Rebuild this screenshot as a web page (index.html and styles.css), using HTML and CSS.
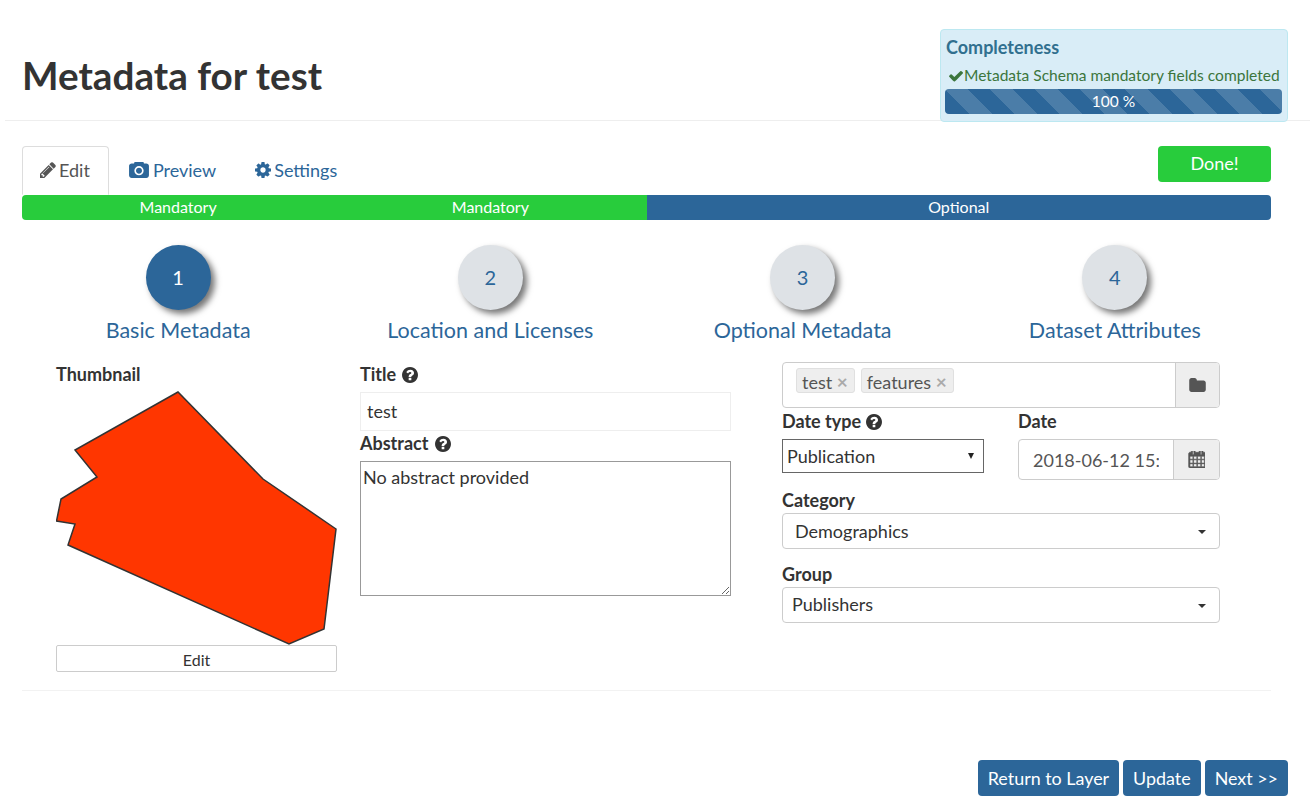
FILE: index.html
```html
<!DOCTYPE html>
<html>
<head>
    <title>Metadata for test</title>
    <link rel="stylesheet" href="styles.css">
</head>
<body>
    <svg class="icon-defs" xmlns="http://www.w3.org/2000/svg">
        <symbol id="i-pencil" viewBox="128 128 1536 1536"><path d="M491 1536l91-91-235-235-91 91v107h128v128h107zm523-928q0-22-22-22-10 0-17 7l-542 542q-7 7-7 17 0 22 22 22 10 0 17-7l542-542q7-7 7-17zm-54-192l416 416-832 832h-416v-416zm683 96q0 53-37 90l-166 166-416-416 166-165q36-38 90-38 53 0 91 38l235 234q37 39 37 91z"/></symbol>
        <symbol id="i-camera" viewBox="0 120 1920 1544"><path d="M960 672q119 0 203.500 84.500t84.500 203.500-84.500 203.500-203.500 84.500-203.500-84.500-84.500-203.500 84.500-203.500 203.500-84.500zm704-416q106 0 181 75t75 181v896q0 106-75 181t-181 75h-1408q-106 0-181-75t-75-181v-896q0-106 75-181t181-75h224l51-136q19-49 69.500-84.500t103.500-35.500h512q53 0 103.500 35.500t69.500 84.500l51 136h224zm-704 1152q185 0 316.500-131.500t131.500-316.500-131.500-316.500-316.500-131.500-316.500 131.500-131.500 316.500 131.500 316.500 316.500 131.500z"/></symbol>
        <symbol id="i-cog" viewBox="0 128 1536 1536"><path d="M1024 896q0-106-75-181t-181-75-181 75-75 181 75 181 181 75 181-75 75-181zm512-109v222q0 12-8 23t-20 13l-185 28q-19 54-39 91 35 50 107 138 10 12 10 25t-9 23q-27 37-99 108t-94 71q-12 0-26-9l-138-108q-44 23-91 38-16 136-29 186-7 28-36 28h-222q-14 0-24.500-8.500t-11.500-21.500l-28-184q-49-16-90-37l-141 107q-10 9-25 9-14 0-25-11-126-114-165-168-7-10-7-23 0-12 8-23 15-21 51-66.500t54-70.500q-27-50-41-99l-183-27q-13-2-21-12.500t-8-23.500v-222q0-12 8-23t19-13l186-28q14-46 39-92-40-57-107-138-10-12-10-24 0-10 9-23 26-36 98.500-107.500t94.500-71.500q13 0 26 10l138 107q44-23 91-38 16-136 29-186 7-28 36-28h222q14 0 24.500 8.500t11.500 21.500l28 184q49 16 90 37l142-107q9-9 24-9 13 0 25 10 129 119 165 170 7 8 7 22 0 12-8 23-15 21-51 66.500t-54 70.500q26 50 41 98l183 28q13 2 21 12.500t8 23.500z"/></symbol>
        <symbol id="i-question" viewBox="0 128 1536 1536"><path d="M896 1376v-192q0-14-9-23t-23-9h-192q-14 0-23 9t-9 23v192q0 14 9 23t23 9h192q14 0 23-9t9-23zm256-672q0-88-55.500-163t-138.500-116-170-41q-243 0-371 213-15 24 8 42l132 100q7 6 19 6 16 0 25-12 53-68 86-92 34-24 86-24 48 0 85.500 26t37.500 59q0 38-20 61t-68 45q-63 28-115.500 86.500t-52.500 125.500v36q0 14 9 23t23 9h192q14 0 23-9t9-23q0-19 21.500-49.500t54.500-49.500q32-18 49-28.500t46-35 44.500-48 28-60.500 12.500-81zm384 192q0 209-103 385.500t-279.500 279.500-385.500 103-385.500-103-279.500-279.500-103-385.500 103-385.500 279.500-279.500 385.500-103 385.500 103 279.500 279.500 103 385.500z"/></symbol>
        <symbol id="i-check" viewBox="121 270 1550 1260"><path d="M1671 566q0 40-28 68l-724 724-136 136q-28 28-68 28t-68-28l-136-136-362-362q-28-28-28-68t28-68l136-136q28-28 68-28t68 28l294 295 656-657q28-28 68-28t68 28l136 136q28 28 28 68z"/></symbol>
        <symbol id="i-folder" viewBox="0 128 1664 1408"><path d="M1664 608v704q0 92-66 158t-158 66h-1216q-92 0-158-66t-66-158v-960q0-92 66-158t158-66h320q92 0 158 66t66 158v32h672q92 0 158 66t66 158z"/></symbol>
        <symbol id="i-calendar" viewBox="0 128 1664 1664"><path d="M192 1664h288v-288h-288v288zm352 0h320v-288h-320v288zm-352-352h288v-320h-288v320zm352 0h320v-320h-320v320zm-352-384h288v-288h-288v288zm736 736h320v-288h-320v288zm-384-736h320v-288h-320v288zm768 736h288v-288h-288v288zm-384-352h320v-320h-320v320zm-352-864v-288q0-13-9.500-22.500t-22.500-9.500h-64q-13 0-22.500 9.500t-9.500 22.500v288q0 13 9.500 22.500t22.500 9.500h64q13 0 22.500-9.500t9.500-22.500zm736 864h288v-320h-288v320zm-384-384h320v-288h-320v288zm384 0h288v-288h-288v288zm32-480v-288q0-13-9.500-22.500t-22.500-9.500h-64q-13 0-22.500 9.500t-9.500 22.500v288q0 13 9.500 22.500t22.500 9.500h64q13 0 22.500-9.500t9.500-22.500zm384-64v1280q0 52-38 90t-90 38h-1408q-52 0-90-38t-38-90v-1280q0-52 38-90t90-38h128v-96q0-66 47-113t113-47h64q66 0 113 47t47 113v96h384v-96q0-66 47-113t113-47h64q66 0 113 47t47 113v96h128q52 0 90 38t38 90z"/></symbol>
    </svg>

    <div class="page-header">
        <h1>Metadata for test</h1>
        <div class="completeness">
            <h4>Completeness</h4>
            <p class="complete-msg"><svg class="icon icon-check"><use href="#i-check"/></svg>Metadata Schema mandatory fields completed</p>
            <div class="progress-striped">100 %</div>
        </div>
    </div>

    <div class="main">
        <div class="tab-row">
            <ul class="tabs">
                <li class="tab active"><svg class="icon"><use href="#i-pencil"/></svg>Edit</li>
                <li class="tab"><svg class="icon icon-wide"><use href="#i-camera"/></svg>Preview</li>
                <li class="tab"><svg class="icon"><use href="#i-cog"/></svg>Settings</li>
            </ul>
            <button class="btn-done">Done!</button>
        </div>

        <div class="stage-bar">
            <div class="stage mandatory">Mandatory</div>
            <div class="stage mandatory">Mandatory</div>
            <div class="stage optional">Optional</div>
        </div>

        <div class="steps">
            <div class="step current">
                <div class="step-circle">1</div>
                <div class="step-label">Basic Metadata</div>
            </div>
            <div class="step">
                <div class="step-circle">2</div>
                <div class="step-label">Location and Licenses</div>
            </div>
            <div class="step">
                <div class="step-circle">3</div>
                <div class="step-label">Optional Metadata</div>
            </div>
            <div class="step">
                <div class="step-circle">4</div>
                <div class="step-label">Dataset Attributes</div>
            </div>
        </div>

        <div class="form-panel">
            <div class="col-thumb">
                <label class="field-label">Thumbnail</label>
                <svg class="thumb" viewBox="0 0 281 255" xmlns="http://www.w3.org/2000/svg">
                    <polygon points="122,2 19,60 41,87 5,109 0.500,131 19,134 12,155 233,254 268,239 280,139 207,89" fill="#ff3600" stroke="#333" stroke-width="1.500"/>
                </svg>
                <button class="btn-thumb">Edit</button>
            </div>

            <div class="col-main">
                <label class="field-label">Title <svg class="icon"><use href="#i-question"/></svg></label>
                <input class="input-title" type="text" value="test">
                <label class="field-label">Abstract <svg class="icon"><use href="#i-question"/></svg></label>
                <textarea class="input-abstract">No abstract provided</textarea>
            </div>

            <div class="col-side">
                <div class="input-group keywords">
                    <div class="tag-box">
                        <span class="tag">test <b>×</b></span>
                        <span class="tag">features <b>×</b></span>
                    </div>
                    <span class="addon"><svg class="icon icon-folder"><use href="#i-folder"/></svg></span>
                </div>

                <div class="date-row">
                    <div class="date-type">
                        <label class="field-label">Date type <svg class="icon"><use href="#i-question"/></svg></label>
                        <div class="select-wrap">
                            <select class="native-select"><option>Publication</option></select>
                        </div>
                    </div>
                    <div class="date-value">
                        <label class="field-label">Date</label>
                        <div class="input-group">
                            <input class="input-date" type="text" value="2018-06-12 15:00">
                            <span class="addon"><svg class="icon icon-calendar"><use href="#i-calendar"/></svg></span>
                        </div>
                    </div>
                </div>

                <label class="field-label label-category">Category</label>
                <div class="dropdown category">Demographics</div>

                <label class="field-label label-group">Group</label>
                <div class="dropdown group">Publishers</div>
            </div>
        </div>
    </div>

    <div class="actions">
        <button class="btn-blue">Return to Layer</button>
        <button class="btn-blue">Update</button>
        <button class="btn-blue">Next &gt;&gt;</button>
    </div>
</body>
</html>
```

FILE: styles.css
```css
/* Base */
body {
    font-family: Lato, "Open Sans", sans-serif;
    font-size: 18px;
    color: #333;
    margin: 0;
    background-color: #fff;
}

.icon-defs {
    display: none;
}

.icon {
    width: 16px;
    height: 16px;
    fill: currentColor;
    vertical-align: -2px;
}

.icon-check {
    width: 14px;
    height: 12px;
    margin-right: 1px;
    vertical-align: -1px;
}

.icon-folder {
    width: 17px;
    height: 14px;
}

.icon-calendar {
    width: 17px;
    height: 17px;
    stroke: currentColor;
    stroke-width: 60;
}

/* Header */
.page-header {
    display: flex;
    justify-content: space-between;
    align-items: flex-end;
    height: 120px;
    margin: 0 5px;
    padding: 0 22px 0 17px;
    border-bottom: 1px solid #eee;
}

.page-header h1 {
    font-size: 38.700px;
    line-height: 46px;
    font-weight: 700;
    margin: 0 0 22px;
}

.completeness {
    width: 348px;
    height: 93px;
    box-sizing: border-box;
    margin-bottom: -2px;
    padding: 6px 5px 0 4px;
    background-color: #d9edf7;
    border: 1px solid #bce8f1;
    border-radius: 4px;
    position: relative;
}

.completeness h4 {
    font-size: 18px;
    line-height: 22px;
    font-weight: 700;
    margin: 0 0 0 1px;
    color: #31708f;
}

.complete-msg {
    font-size: 15.550px;
    line-height: 20px;
    margin: 7px 0 4px 4px;
    color: #3c763d;
    white-space: nowrap;
}

.progress-striped {
    height: 25px;
    line-height: 25px;
    border-radius: 4px;
    color: #fff;
    font-size: 15.500px;
    text-align: center;
    background-color: #2c6699;
    background-image: linear-gradient(45deg, rgba(255,255,255,.15) 25%, transparent 25%, transparent 50%, rgba(255,255,255,.15) 50%, rgba(255,255,255,.15) 75%, transparent 75%, transparent);
    background-size: 45px 45px;
}

/* Tabs */
.main {
    margin: 25px 44px 0 22px;
}

.tab-row {
    display: flex;
    justify-content: space-between;
    align-items: flex-start;
}

.tabs {
    display: flex;
    list-style: none;
    margin: 0;
    padding: 0;
}

.tab {
    display: flex;
    align-items: center;
    gap: 3px;
    height: 49px;
    box-sizing: border-box;
    padding: 0 19px 2px 20px;
    color: #2c6699;
    white-space: nowrap;
}

.tab .icon {
    vertical-align: baseline;
}

.tab .icon-wide {
    width: 20px;
    margin-right: 1px;
}

.tab.active {
    padding: 0 18px 2px 17px;
    color: #555;
    border: 1px solid #ddd;
    border-bottom-color: #fff;
    border-radius: 4px 4px 0 0;
}

.btn-done {
    width: 113px;
    height: 36px;
    padding: 0 0 2px;
    border: none;
    border-radius: 4px;
    background-color: #28cc3c;
    color: #fff;
    font-family: inherit;
    font-size: 18px;
}

/* Stage bar */
.stage-bar {
    display: flex;
    height: 25px;
    border-radius: 4px;
    overflow: hidden;
}

.stage {
    flex: 1;
    line-height: 23px;
    text-align: center;
    color: #fff;
    font-size: 16px;
}

.stage.mandatory {
    background-color: #28cc3c;
}

.stage.optional {
    flex: 2;
    background-color: #2c6699;
}

/* Steps */
.steps {
    display: flex;
    margin-top: 25px;
}

.step {
    flex: 1;
    text-align: center;
}

.step-circle {
    width: 65px;
    height: 65px;
    line-height: 65px;
    margin: 0 auto;
    border-radius: 50%;
    background-color: #dee2e6;
    color: #2c6699;
    font-size: 20px;
    box-shadow: 4px 4px 6px #777;
}

.step.current .step-circle {
    background-color: #2c6699;
    color: #fff;
}

.step-label {
    margin-top: 7px;
    margin-bottom: -1px;
    font-size: 21.500px;
    line-height: 26px;
    color: #2c6699;
}

/* Form */
.form-panel {
    display: flex;
    height: 344px;
    box-sizing: border-box;
    margin-top: 5px;
    padding: 15px 0 0 34px;
    border-bottom: 1px solid #f2f2f2;
}

.field-label {
    display: block;
    font-weight: 700;
    line-height: 24px;
}

.col-thumb {
    width: 281px;
}

.thumb {
    display: block;
    width: 281px;
    height: 255px;
    margin-top: 4px;
}

.btn-thumb {
    display: block;
    width: 281px;
    height: 27px;
    padding: 2px 0 0;
    background-color: #fff;
    border: 1px solid #ccc;
    border-radius: 2px;
    color: #333;
    font-family: inherit;
    font-size: 16px;
}

.col-main {
    width: 371px;
    margin-left: 23px;
}

.col-main .icon {
    margin-left: 2px;
}

.input-title {
    display: block;
    width: 100%;
    height: 39px;
    box-sizing: border-box;
    margin-top: 6px;
    padding: 0 6px 2px;
    border: 1px solid #eee;
    color: #333;
    font-family: inherit;
    font-size: 18px;
}

.input-abstract {
    display: block;
    width: 100%;
    height: 135px;
    box-sizing: border-box;
    margin-top: 6px;
    padding: 4px 2px;
    border: 1px solid #999;
    color: #333;
    font-family: inherit;
    font-size: 18px;
}

.col-side {
    width: 438px;
    margin-left: 51px;
}

.input-group {
    display: flex;
    height: 41px;
    box-sizing: border-box;
    border: 1px solid #ccc;
    border-radius: 4px;
}

.input-group.keywords {
    height: 46px;
}

.tag-box {
    flex: 1;
    padding: 5px 0 0 13px;
    display: flex;
    align-items: flex-start;
    gap: 6px;
}

.tag {
    height: 23px;
    line-height: 27px;
    padding: 0 6px 0 5px;
    background-color: #eee;
    border: 1px solid #e0e0e0;
    border-radius: 3px;
    color: #555;
}

.tag b {
    color: #aaa;
    font-size: 19px;
    line-height: 20px;
}

.addon {
    width: 43px;
    display: flex;
    align-items: center;
    justify-content: center;
    background-color: #eee;
    border-left: 1px solid #ccc;
    border-radius: 0 3px 3px 0;
    color: #555;
}

.date-row {
    display: flex;
    margin-top: 1px;
}

.date-type {
    width: 202px;
}

.select-wrap {
    position: relative;
    margin-top: 6px;
}

.select-wrap::after {
    content: "";
    position: absolute;
    right: 10px;
    top: 14px;
    border-top: 6px solid #222;
    border-left: 3.500px solid transparent;
    border-right: 3.500px solid transparent;
}

.native-select {
    display: block;
    width: 202px;
    height: 34px;
    padding: 0 0 0 4px;
    appearance: none;
    background-color: #fff;
    border: 1px solid #666;
    border-radius: 0;
    color: #333;
    font-family: inherit;
    font-size: 18px;
}

.date-value {
    width: 202px;
    margin-left: 34px;
}

.date-value .input-group {
    margin-top: 6px;
}

.date-value .addon {
    width: 45px;
}

.input-date {
    flex: 1;
    min-width: 0;
    border: none;
    border-radius: 4px;
    padding: 0 14px 0 14px;
    color: #555;
    font-family: inherit;
    font-size: 18px;
    background: transparent;
}

.label-category {
    margin-top: 8px;
}

.label-group {
    margin-top: 13px;
}

.dropdown {
    position: relative;
    height: 36px;
    line-height: 34px;
    box-sizing: border-box;
    margin-top: 1px;
    padding-left: 12px;
    border: 1px solid #ccc;
    border-radius: 4px;
}

.dropdown.group {
    padding-left: 9px;
    line-height: 32px;
}

.dropdown::after {
    content: "";
    position: absolute;
    right: 13px;
    top: 16px;
    border-top: 4.500px solid #333;
    border-left: 4.500px solid transparent;
    border-right: 4.500px solid transparent;
}

/* Bottom buttons */
.actions {
    display: flex;
    justify-content: flex-end;
    gap: 4px;
    margin: 69px 27px 0 0;
}

.btn-blue {
    height: 36px;
    padding: 0 10px;
    background-color: #2c6699;
    border: none;
    border-radius: 4px;
    color: #fff;
    font-family: inherit;
    font-size: 17.900px;
}
```
